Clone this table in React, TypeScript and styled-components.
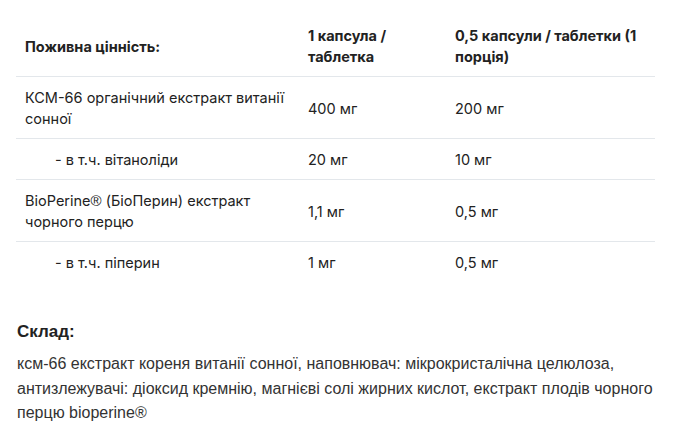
import React from "react";
import styled, { createGlobalStyle } from "styled-components";

const Global = createGlobalStyle`
  body { margin: 0; background: #fff; }
`;

const Page = styled.div`
  padding: 15px 25px 0 16px;
  width: 680px;
  box-sizing: border-box;
  color: #212529;
`;

const Table = styled.table`
  width: 639px;
  table-layout: fixed;
  border-collapse: collapse;
  font-family: Inter, "Noto Sans", sans-serif;
  font-size: 14.5px;
  line-height: 21px;
  color: #222;
`;

const Col = styled.col<{ $w: number }>`
  width: ${(p) => p.$w}px;
`;

const Cell = styled.td<{ $indent?: boolean; $head?: boolean }>`
  padding: 10px 6px 9px ${(p) => (p.$indent ? 39 : 9)}px;
  vertical-align: middle;
  text-align: left;
  font-weight: ${(p) => (p.$head ? 700 : 400)};
`;

const Row = styled.tr<{ $line?: boolean }>`
  border-bottom: ${(p) => (p.$line ? "1px solid #e3e7eb" : "none")};
`;

const Reg = styled.span`
  font-family: "Liberation Sans", Arial, sans-serif;
  font-size: 15px;
`;

const Title = styled.h3`
  margin: 38px 0 0 1px;
  font-family: "Liberation Sans", Arial, sans-serif;
  font-size: 17px;
  font-weight: 700;
  color: #222;
  line-height: 24px;
`;

const Text = styled.p`
  margin: 8px 0 0 1px;
  font-family: "Liberation Sans", Arial, sans-serif;
  font-size: 16px;
  line-height: 24.5px;
  color: #333;
`;

type RowData = { name: React.ReactNode; a: string; b: string; indent?: boolean };

const rows: RowData[] = [
  { name: "КСМ-66 органічний екстракт витанії сонної", a: "400 мг", b: "200 мг" },
  { name: "- в т.ч. вітаноліди", a: "20 мг", b: "10 мг", indent: true },
  {
    name: (
      <>
        BioPerine<Reg>®</Reg> (БіоПерин) екстракт чорного перцю
      </>
    ),
    a: "1,1 мг",
    b: "0,5 мг",
  },
  { name: "- в т.ч. піперин", a: "1 мг", b: "0,5 мг", indent: true },
];

export default function App() {
  return (
    <Page>
      <Global />
      <Table>
        <colgroup>
          <Col $w={283} />
          <Col $w={147} />
          <Col $w={209} />
        </colgroup>
        <tbody>
          <Row $line>
            <Cell $head>Поживна цінність:</Cell>
            <Cell $head>1 капсула / таблетка</Cell>
            <Cell $head>0,5 капсули / таблетки (1 порція)</Cell>
          </Row>
          {rows.map((r, i) => (
            <Row key={i} $line={i < rows.length - 1}>
              <Cell $indent={r.indent}>{r.name}</Cell>
              <Cell>{r.a}</Cell>
              <Cell>{r.b}</Cell>
            </Row>
          ))}
        </tbody>
      </Table>
      <Title>Склад:</Title>
      <Text>
        ксм-66 екстракт кореня витанії сонної, наповнювач: мікрокристалічна целюлоза,
        антизлежувачі: діоксид кремнію, магнієві солі жирних кислот, екстракт плодів чорного
        перцю bioperine®
      </Text>
    </Page>
  );
}
